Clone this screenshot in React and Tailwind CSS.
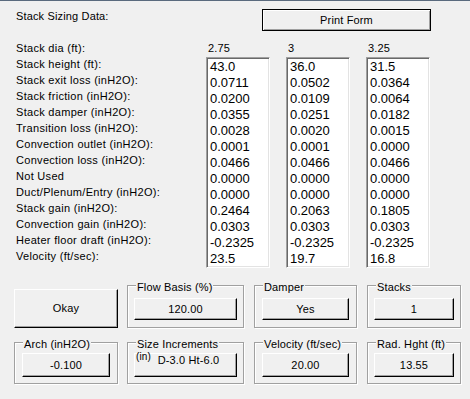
import React from "react";

const LABELS = [
    "Stack height (ft):",
    "Stack exit loss (inH2O):",
    "Stack friction (inH2O):",
    "Stack damper (inH2O):",
    "Transition loss (inH2O):",
    "Convection outlet (inH2O):",
    "Convection loss (inH2O):",
    "Not Used",
    "Duct/Plenum/Entry (inH2O):",
    "Stack gain (inH2O):",
    "Convection gain (inH2O):",
    "Heater floor draft (inH2O):",
    "Velocity (ft/sec):",
];

const COLUMNS = [
    {
        dia: "2.75",
        values: ["43.0", "0.0711", "0.0200", "0.0355", "0.0028", "0.0001", "0.0466", "0.0000", "0.0000", "0.2464", "0.0303", "-0.2325", "23.5"],
    },
    {
        dia: "3",
        values: ["36.0", "0.0502", "0.0109", "0.0251", "0.0020", "0.0001", "0.0466", "0.0000", "0.0000", "0.2063", "0.0303", "-0.2325", "19.7"],
    },
    {
        dia: "3.25",
        values: ["31.5", "0.0364", "0.0064", "0.0182", "0.0015", "0.0000", "0.0466", "0.0000", "0.0000", "0.1805", "0.0303", "-0.2325", "16.8"],
    },
];

const RAISED =
    "bg-[#f0f0f0] border border-t-white border-l-white border-r-black border-b-black shadow-[inset_-1px_-1px_0_#a0a0a0] text-black";

function Group({ label, width, height, pad, children }) {
    return (
        <div
            className={`relative border border-[#a0a0a0] shadow-[inset_1px_1px_0_#fff,1px_1px_0_#fff] ${width} ${height} ${pad}`}
        >
            <span className="absolute left-[8px] top-[-5px] bg-[#f0f0f0] px-[1px] leading-[13px]">{label}</span>
            {children}
        </div>
    );
}

function ValueButton({ children, tall }) {
    return (
        <button
            className={`w-full ${tall ? "h-[24px]" : "h-[22px]"} ${RAISED} flex items-center justify-center leading-[13px]`}
        >
            {children}
        </button>
    );
}

export default function App() {
    return (
        <div className="w-[470px] h-[399px] overflow-hidden bg-[#f0f0f0] border-t border-[#5a6a7e] font-['Liberation_Sans',Arial,sans-serif] text-[11px] tracking-[0.15px] text-black">
            {/* Header */}
            <div className="flex items-start pl-[16px] pt-[8px]">
                <div className="w-[246px] leading-[13px] mt-[1px]">Stack Sizing Data:</div>
                <button className="w-[169px] h-[22px] bg-[#f0f0f0] border border-black shadow-[inset_1px_1px_0_#fff,inset_-1px_-1px_0_#a0a0a0] leading-[13px]">
                    Print Form
                </button>
            </div>

            {/* Data table */}
            <div className="flex mt-[9px] pl-[16px]">
                <div className="w-[190px] leading-[16px] tracking-[0.3px]">
                    <div>Stack dia (ft):</div>
                    {LABELS.map((l) => (
                        <div key={l}>{l}</div>
                    ))}
                </div>
                <div className="flex gap-[16px]">
                    {COLUMNS.map((c) => (
                        <div key={c.dia} className="w-[64px]">
                            <div className="h-[16px] leading-[16px] pl-[2px]">{c.dia}</div>
                            <div className="mt-[1px] h-[211px] bg-white border border-t-[#a0a0a0] border-l-[#a0a0a0] border-r-white border-b-white shadow-[inset_1px_1px_0_#696969,inset_-1px_-1px_0_#e3e3e3] pt-[1px] pl-[3px] text-[13px] leading-[16px] tracking-normal">
                                {c.values.map((v, i) => (
                                    <div key={i}>{v}</div>
                                ))}
                            </div>
                        </div>
                    ))}
                </div>
            </div>

            {/* Bottom controls */}
            <div className="flex items-start pl-[14px] mt-[17px]">
                <button className={`w-[104px] h-[39px] mt-[4px] ${RAISED} leading-[13px]`}>Okay</button>
                <div className="ml-[9px]">
                    <Group label="Flow Basis (%)" width="w-[117px]" height="h-[43px]" pad="pt-[12px] px-[6px]">
                        <ValueButton>120.00</ValueButton>
                    </Group>
                </div>
                <div className="ml-[10px]">
                    <Group label="Damper" width="w-[103px]" height="h-[43px]" pad="pt-[12px] px-[7px]">
                        <ValueButton>Yes</ValueButton>
                    </Group>
                </div>
                <div className="ml-[10px]">
                    <Group label="Stacks" width="w-[94px]" height="h-[43px]" pad="pt-[12px] px-[6px]">
                        <ValueButton>1</ValueButton>
                    </Group>
                </div>
            </div>
            <div className="flex items-start pl-[14px] mt-[14px]">
                <Group label="Arch (inH2O)" width="w-[104px]" height="h-[42px]" pad="pt-[10px] px-[7px]">
                    <ValueButton tall>-0.100</ValueButton>
                </Group>
                <div className="ml-[9px]">
                    <Group label="Size Increments" width="w-[117px]" height="h-[42px]" pad="pt-[10px] px-[6px]">
                        <button className={`relative w-full h-[24px] ${RAISED} flex justify-center items-start leading-[13px]`}>
                            <span className="absolute left-[1px] top-[-3px] text-[10px] leading-[11px]">(in)</span>
                            <span className="pl-[6px]">D-3.0 Ht-6.0</span>
                        </button>
                    </Group>
                </div>
                <div className="ml-[10px]">
                    <Group label="Velocity (ft/sec)" width="w-[103px]" height="h-[42px]" pad="pt-[10px] px-[7px]">
                        <ValueButton tall>20.00</ValueButton>
                    </Group>
                </div>
                <div className="ml-[10px]">
                    <Group label="Rad. Hght (ft)" width="w-[94px]" height="h-[42px]" pad="pt-[10px] px-[6px]">
                        <ValueButton tall>13.55</ValueButton>
                    </Group>
                </div>
            </div>
        </div>
    );
}
